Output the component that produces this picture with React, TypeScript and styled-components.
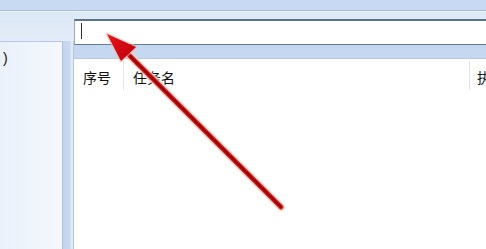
import styled, { createGlobalStyle } from "styled-components";

const GlobalStyle = createGlobalStyle`
    html, body {
        margin: 0;
        padding: 0;
        background: #ffffff;
    }
    body {
        font-family: "Noto Sans CJK SC", "Liberation Sans", sans-serif;
    }
`

const columns = [
    { label: "序号", width: 50, pad: 9, divider: true },
    { label: "任务名", width: 346, pad: 9, divider: true },
    { label: "执行时间", width: 120, pad: 7, divider: false },
];

export default function App() {
    return (
        <>
            <GlobalStyle />
            <Window>
                <TopBand />
                <Body>
                    <LeftPane>
                        <LeftTopFill />
                        <LeftRow>
                            <TreePanel>
                                <TreeItem>)</TreeItem>
                            </TreePanel>
                            <Splitter />
                        </LeftRow>
                    </LeftPane>
                    <RightPane>
                        <Toolbar>
                            <SearchBox>
                                <Caret />
                            </SearchBox>
                        </Toolbar>
                        <BlueGap />
                        <ListView>
                            <HeaderRow>
                                {columns.map((c) => (
                                    <HeaderCell key={c.label} $w={c.width} $pad={c.pad} $divider={c.divider}>
                                        {c.label}
                                    </HeaderCell>
                                ))}
                            </HeaderRow>
                        </ListView>
                    </RightPane>
                </Body>

                {/* annotation arrow drawn over the window */}
                <ArrowLayer viewBox="0 0 486 249" width="486" height="249">
                    <defs>
                        <linearGradient id="head" x1="107" y1="34" x2="130" y2="56" gradientUnits="userSpaceOnUse">
                            <stop offset="0" stopColor="#e8151b" />
                            <stop offset="1" stopColor="#c4000f" />
                        </linearGradient>
                    </defs>
                    <line x1="281" y1="207" x2="127" y2="53" stroke="#f7cdbd" strokeWidth="8" strokeLinecap="round" opacity="0.8" />
                    <line x1="281" y1="207" x2="127" y2="53" stroke="#d63a2e" strokeWidth="5" strokeLinecap="round" />
                    <line x1="281" y1="207" x2="127" y2="53" stroke="#a3000e" strokeWidth="3" strokeLinecap="round" />
                    <polygon points="107,34 136,47 121,61" fill="#f4b8a8" stroke="#f4b8a8" strokeWidth="3" strokeLinejoin="round" opacity="0.6" />
                    <polygon points="107,34 136,47 121,61" fill="url(#head)" />
                </ArrowLayer>
            </Window>
        </>
    );
}

const Window = styled.div`
    width: 486px;
    height: 249px;
    position: relative;
    overflow: hidden;
    display: flex;
    flex-direction: column;
    background: #dfe9f6;
`

const TopBand = styled.div`
    height: 10px;
    flex-shrink: 0;
    background: #c7daf2;
    border-bottom: 1px solid #a6bddb;
    box-shadow: 0 1px 0 #edf3fb;
    position: relative;
`

const Body = styled.div`
    flex: 1;
    min-height: 0;
    display: flex;
    padding-top: 1px;
`

//LEFT_SIDE
const LeftPane = styled.div`
    width: 74px;
    flex-shrink: 0;
    display: flex;
    flex-direction: column;
`

const LeftTopFill = styled.div`
    height: 29px;
    flex-shrink: 0;
    background: linear-gradient(#dde8f6, #e3ecf8);
`

const LeftRow = styled.div`
    flex: 1;
    display: flex;
`

const TreePanel = styled.div`
    width: 63px;
    box-sizing: border-box;
    border-top: 1px solid #b4c8e2;
    border-right: 1px solid #aebfd8;
    background: linear-gradient(to right, #e9f1fb, #f4f8fd);
    padding-top: 7px;
    overflow: hidden;
`

const TreeItem = styled.div`
    padding-left: 3px;
    font-family: "Liberation Sans", "Noto Sans CJK SC", sans-serif;
    font-size: 14px;
    line-height: 18px;
    color: #111111;
`

const Splitter = styled.div`
    flex: 1;
    background: linear-gradient(
        to right,
        #c3d5ee 0,
        #c8d9f0 60%,
        #e0e9f6 78%,
        #e0e9f6 88%,
        #a3b0c2 100%
    );
`

//RIGHT_SIDE
const RightPane = styled.div`
    flex: 1;
    min-width: 0;
    display: flex;
    flex-direction: column;
`

const Toolbar = styled.div`
    height: 33px;
    flex-shrink: 0;
    box-sizing: border-box;
    padding-top: 7px;
    display: flex;
    background: linear-gradient(#dfe9f6, #e4edf8);
`

const SearchBox = styled.div`
    flex: 1;
    margin-right: -4px;
    box-sizing: border-box;
    height: 26px;
    background: #ffffff;
    border: 1px solid #98a9bf;
    border-top: 2px solid #58728f;
    border-bottom: 1px solid #637b97;
    padding: 2px 0 0 6px;
    display: flex;
    align-items: flex-start;
`

const Caret = styled.div`
    width: 1px;
    height: 16px;
    background: #2b2b2b;
`

const BlueGap = styled.div`
    height: 13px;
    flex-shrink: 0;
    background: #c6d8f0;
`

const ListView = styled.div`
    flex: 1;
    background: #ffffff;
    border-top: 1px solid #b8c8dd;
    overflow: hidden;
`

const HeaderRow = styled.div`
    height: 31px;
    display: flex;
    white-space: nowrap;
`

const HeaderCell = styled.div<{ $w: number; $pad: number; $divider: boolean }>`
    width: ${(p) => p.$w}px;
    flex-shrink: 0;
    box-sizing: border-box;
    margin-top: 2px;
    padding: 3px 0 0 ${(p) => p.$pad}px;
    display: flex;
    align-items: center;
    border-right: 1px solid ${(p) => (p.$divider ? "#e1e4e8" : "transparent")};
    font-size: 14px;
    line-height: 1;
    color: #111111;
    overflow: hidden;
`

const ArrowLayer = styled.svg`
    position: absolute;
    left: 0;
    top: 0;
    pointer-events: none;
`
